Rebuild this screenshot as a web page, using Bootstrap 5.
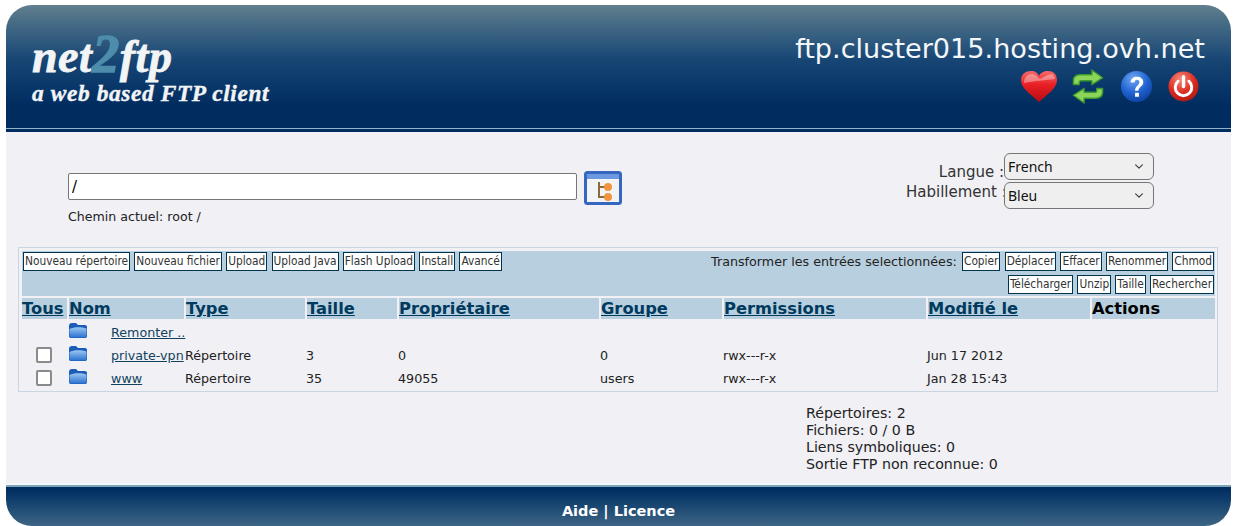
<!DOCTYPE html>
<html lang="fr">
<head>
  <meta charset="UTF-8">
  <title>net2ftp</title>
  <link href="https://cdn.jsdelivr.net/npm/bootstrap@5.3.0/dist/css/bootstrap.min.css" rel="stylesheet">
  <style>
    body { background: #fff; font-family: "DejaVu Sans", sans-serif; font-size: 13px; color: #222; overflow: hidden; }
    .shell { margin: 5px 2px 0 6px; height: 521px; display: flex; flex-direction: column; }
    .top-bar { height: 127px; border-radius: 26px 26px 0 0; background: linear-gradient(#617f8e 0, #3d6482 25px, #174675 55px, #002c60 100px, #002c60 100%); border-bottom: 3px solid #002c60; box-shadow: inset 0 -1px 0 #8fb4c9; padding: 30px 26px 0 26px; color: #fff; }
    .logo-main { font-family: "Liberation Serif", serif; font-weight: 700; font-style: italic; font-size: 46px; line-height: 44px; color: #f2f4f6; -webkit-text-stroke: .8px #f2f4f6; letter-spacing: .5px; }
    .logo-two { color: #4d8cab; -webkit-text-stroke: 1.5px #4d8cab; font-size: 54px; line-height: 30px; }
    .logo-sub { font-family: "Liberation Serif", serif; font-weight: 700; font-style: italic; font-size: 23.4px; line-height: 28px; letter-spacing: .6px; color: #f2f4f6; -webkit-text-stroke: .4px #f2f4f6; }
    .host-name { font-size: 27.1px; line-height: 30px; color: #f4f7f9; margin-top: -1px; }
    .top-icons { gap: 15px; margin-top: 5px; padding-right: 6px; }
    .heart-pic { margin-right: -3px; }
    .main-area { flex: 1; background: #f0f0f5; padding: 20px 13px 0 12px; }
    .path-zone { padding: 19px 0 0 50px; }
    .path-input { width: 509px; height: 27px; margin-top: 2px; border: 1px solid #767676; border-radius: 2px; padding: 0 3px; font-size: 15px; background: #fff; }
    .tree-btn { display: block; width: 38px; height: 34px; padding: 0; border: 0; background: none; }
    .path-gap { gap: 7px; }
    .path-note { margin-top: 3px; font-size: 12.6px; }
    .lang-zone { width: 248px; margin-right: 64px; margin-top: 1px; font-size: 15px; color: #333; }
    .lang-label { width: 98px; text-align: right; white-space: nowrap; line-height: 20px; }
    .lang-first { padding-top: 9px; margin-bottom: -2px; }
    .lang-second { margin-top: 2px; }
    .lang-select { width: 150px; height: 27px; padding: 0 26px 0 3px; font-family: "Noto Sans", sans-serif; font-size: 14px; line-height: 22px; color: #111; background-color: #efefef; background-position: right 8px center; background-size: 12px 9px; border: 1px solid #767676; border-radius: 6px; }
    .file-panel { margin-top: 20px; border: 1px solid #c9d6e2; padding: 3px 2px 0 3px; height: 145px; }
    .tool-rows { background: #b8cfdf; height: 45px; }
    .act-btn { display: block; height: 19px; padding: 0 1px; border: 1px solid #00334d; border-radius: 0; background: #fff; font-family: "DejaVu Sans", sans-serif; font-stretch: condensed; font-size: 11.8px; line-height: 17px; color: #333; white-space: nowrap; }
    .tool-line { height: 23px; padding: 1px 1px 0 1px; gap: 4.2px; }
    .tool-note { font-size: 12.7px; color: #222; margin-right: 1px; }
    .file-table { width: 1193px; table-layout: fixed; border-collapse: separate; border-spacing: 0; margin-top: 2px; }
    .file-table th { background: #b8cfdf; border-left: 2px solid #f0f0f5; height: 21px; padding: 1px 0 0; font-size: 16.3px; line-height: 20px; font-weight: 700; color: #000; white-space: nowrap; }
    .file-table th:first-child { border-left: 0; }
    .file-table th a { color: #003a5e; }
    .file-table td { padding: 0 0 1px 1px; height: 23px; font-size: 12.7px; line-height: 16px; color: #222; white-space: nowrap; overflow: visible; vertical-align: bottom; }
    .file-table a { color: #10425f; }
    .row-check { display: block; width: 16px; height: 16px; margin: 0 0 1px 13px; border: 2px solid #8a8a8a; border-radius: 2px; background: #fff; appearance: none; }
    .folder-pic { display: block; margin-bottom: 2px; }
    .c-all { width: 45px; } .c-pic { width: 43px; } .c-name { width: 74px; } .c-type { width: 121px; } .c-size { width: 92px; }
    .c-owner { width: 202px; } .c-group { width: 123px; } .c-perm { width: 204px; } .c-date { width: 164px; } .c-act { width: 125px; }
    .stat-block { margin: 13px 0 0 788px; font-size: 14.2px; line-height: 17px; color: #222; }
    .bottom-bar { height: 43px; border-top: 2px solid #f5f8fa; box-shadow: inset 0 2px 0 #7ea6b8; border-radius: 0 0 26px 26px; background: linear-gradient(#002c60 3px, #0b3a6a 12px, #3d6584 100%); color: #fff; font-weight: 700; font-size: 14.5px; text-align: center; padding-top: 17px; line-height: 18px; }
  </style>
</head>
<body>
  <div class="shell">
    <div class="top-bar d-flex justify-content-between">
      <div>
        <div class="logo-main">net<span class="logo-two">2</span>ftp</div>
        <div class="logo-sub">a web based FTP client</div>
      </div>
      <div class="text-end">
        <div class="host-name">ftp.cluster015.hosting.ovh.net</div>
        <div class="top-icons d-flex justify-content-end align-items-center">
          <svg class="heart-pic" width="40" height="34" viewBox="0 0 38 34">
            <defs><linearGradient id="hrt" x1="0" y1="0" x2="0" y2="1"><stop offset="0" stop-color="#f56a6a"/><stop offset=".45" stop-color="#e81f24"/><stop offset="1" stop-color="#b80c12"/></linearGradient></defs>
            <path d="M19 32C12 25 1 19 1 10C1 4 6 1 11 1C15 1 18 3 19 6C20 3 24 1 28 1C33 1 37 4 37 10C37 19 26 25 19 32Z" fill="url(#hrt)"/>
            <path d="M4 13C4 7 8 4 12 4C16 4 18 8 20 9C24 7 28 4 32 4C34 5 35 7 35 9C26 10 14 11 4 13Z" fill="#fff" opacity=".35"/>
          </svg>
          <svg width="34" height="35" viewBox="0 0 34 36">
            <g fill="#8cd45a" stroke="#3d9a2c" stroke-width="1.5" stroke-linejoin="round">
              <path d="M2 16V12C2 8 5 6 9 6H21V1L32 9L21 16V12H10C8 12 8 13 8 14V16Z"/>
              <path d="M32 20V24C32 28 29 30 25 30H13V35L2 27L13 20V24H24C26 24 26 23 26 22V20Z"/>
            </g>
          </svg>
          <svg width="33" height="33" viewBox="0 0 34 34">
            <defs><radialGradient id="hlp" cx=".4" cy=".25" r=".85"><stop offset="0" stop-color="#6fa8f2"/><stop offset=".55" stop-color="#1f62d0"/><stop offset="1" stop-color="#0c3a97"/></radialGradient></defs>
            <circle cx="17" cy="17" r="16" fill="url(#hlp)"/>
            <path d="M11 13C11 9 14 7 17.500 7C21 7 24 9 24 12.500C24 17 19 17 19 21.500H15.500C15.500 16 20 15.500 20 12.500C20 11 19 10 17.500 10C16 10 15 11 15 13ZM15.500 23.500H19.500V27.500H15.500Z" fill="#fff"/>
          </svg>
          <svg width="31" height="31" viewBox="0 0 32 32">
            <defs><radialGradient id="pwr" cx=".4" cy=".25" r=".85"><stop offset="0" stop-color="#f58a7a"/><stop offset=".55" stop-color="#dc2a20"/><stop offset="1" stop-color="#a81510"/></radialGradient></defs>
            <circle cx="16" cy="16" r="15.500" fill="url(#pwr)"/>
            <path d="M10.500 10.500A8.500 8.500 0 1 0 21.500 10.500" fill="none" stroke="#fff" stroke-width="3" stroke-linecap="round"/>
            <path d="M16 6V16" stroke="#fff" stroke-width="3.500" stroke-linecap="round"/>
          </svg>
        </div>
      </div>
    </div>

    <div class="main-area">
      <div class="d-flex justify-content-between">
        <div class="path-zone">
          <div class="d-flex align-items-start path-gap">
            <input class="path-input" type="text" value="/">
            <button class="tree-btn" type="button" aria-label="Arborescence">
              <svg width="38" height="34" viewBox="0 0 38 34">
                <rect x="1.500" y="1.500" width="35" height="31" rx="2" fill="#f2f3f5" stroke="#3567c0" stroke-width="3"/>
                <rect x="3" y="3" width="32" height="5" fill="#6b98de"/>
                <path d="M15 11V26H22M15 16H22" fill="none" stroke="#8a6a3a" stroke-width="2"/>
                <circle cx="24" cy="16" r="4" fill="#ef9440"/>
                <circle cx="24" cy="26" r="4" fill="#ef9440"/>
              </svg>
            </button>
          </div>
          <div class="path-note">Chemin actuel: root /</div>
        </div>
        <div class="lang-zone">
          <div class="d-flex align-items-start">
            <div class="lang-label lang-first">Langue :</div>
            <select class="form-select lang-select"><option>French</option></select>
          </div>
          <div class="d-flex align-items-start lang-second">
            <div class="lang-label">Habillement :</div>
            <select class="form-select lang-select"><option>Bleu</option></select>
          </div>
        </div>
      </div>

      <div class="file-panel">
        <div class="tool-rows">
          <div class="tool-line d-flex">
            <button class="act-btn" type="button">Nouveau répertoire</button>
            <button class="act-btn" type="button">Nouveau fichier</button>
            <button class="act-btn" type="button">Upload</button>
            <button class="act-btn" type="button">Upload Java</button>
            <button class="act-btn" type="button">Flash Upload</button>
            <button class="act-btn" type="button">Install</button>
            <button class="act-btn" type="button">Avancé</button>
            <span class="tool-note ms-auto">Transformer les entrées selectionnées:</span>
            <button class="act-btn" type="button">Copier</button>
            <button class="act-btn" type="button">Déplacer</button>
            <button class="act-btn" type="button">Effacer</button>
            <button class="act-btn" type="button">Renommer</button>
            <button class="act-btn" type="button">Chmod</button>
          </div>
          <div class="tool-line d-flex justify-content-end">
            <button class="act-btn" type="button">Télécharger</button>
            <button class="act-btn" type="button">Unzip</button>
            <button class="act-btn" type="button">Taille</button>
            <button class="act-btn" type="button">Rechercher</button>
          </div>
        </div>
        <table class="file-table">
          <colgroup>
            <col class="c-all"><col class="c-pic"><col class="c-name"><col class="c-type"><col class="c-size">
            <col class="c-owner"><col class="c-group"><col class="c-perm"><col class="c-date"><col class="c-act">
          </colgroup>
          <thead>
            <tr>
              <th><a href="#">Tous</a></th>
              <th colspan="2"><a href="#">Nom</a></th>
              <th><a href="#">Type</a></th>
              <th><a href="#">Taille</a></th>
              <th><a href="#">Propriétaire</a></th>
              <th><a href="#">Groupe</a></th>
              <th><a href="#">Permissions</a></th>
              <th><a href="#">Modifié le</a></th>
              <th>Actions</th>
            </tr>
          </thead>
          <tbody id="rows"></tbody>
        </table>
      </div>

      <div class="stat-block">
        <div>Répertoires: 2</div>
        <div>Fichiers: 0 / 0 B</div>
        <div>Liens symboliques: 0</div>
        <div>Sortie FTP non reconnue: 0</div>
      </div>
    </div>

    <div class="bottom-bar">Aide | Licence</div>
  </div>
  <svg width="0" height="0" class="d-block">
    <defs>
      <linearGradient id="fld" x1="0" y1="0" x2="0" y2="1"><stop offset="0" stop-color="#9cc6f2"/><stop offset="1" stop-color="#2a72d0"/></linearGradient>
      <symbol id="folder" viewBox="0 0 20 17">
        <path d="M1 4C1 2 2 1 4 1H8L10 3H17C18.500 3 19 4 19 5V14C19 15.500 18 16 17 16H3C2 16 1 15.500 1 14Z" fill="#1c5cb8"/>
        <path d="M1.500 7C6 4.500 14 5 18.500 6.500V14C18.500 15 18 15.500 17 15.500H3C2 15.500 1.500 15 1.500 14Z" fill="url(#fld)"/>
      </symbol>
    </defs>
  </svg>
  <script>
    const entries = [
      { name: "Remonter ..", check: false },
      { name: "private-vpn", check: true, type: "Répertoire", size: "3", owner: "0", group: "0", perm: "rwx---r-x", date: "Jun 17 2012" },
      { name: "www", check: true, type: "Répertoire", size: "35", owner: "49055", group: "users", perm: "rwx---r-x", date: "Jan 28 15:43" }
    ];
    document.getElementById("rows").innerHTML = entries.map(e => `
      <tr>
        <td>${e.check ? '<input class="row-check" type="checkbox">' : ''}</td>
        <td><svg class="folder-pic" width="20" height="17"><use href="#folder"></use></svg></td>
        <td><a href="#">${e.name}</a></td>
        <td>${e.type || ''}</td>
        <td>${e.size || ''}</td>
        <td>${e.owner || ''}</td>
        <td>${e.group || ''}</td>
        <td>${e.perm || ''}</td>
        <td>${e.date || ''}</td>
        <td></td>
      </tr>`).join('');
  </script>
  <script src="https://cdn.jsdelivr.net/npm/bootstrap@5.3.0/dist/js/bootstrap.bundle.min.js"></script>
</body>
</html>
